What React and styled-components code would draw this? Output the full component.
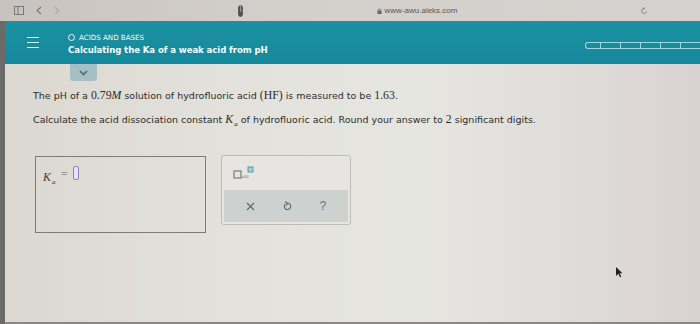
import React from "react";
import styled, { createGlobalStyle } from "styled-components";

const Global = createGlobalStyle`
  html, body { margin: 0; padding: 0; }
  body {
    width: 700px;
    height: 324px;
    overflow: hidden;
    background: #6c6a68;
    font-family: "DejaVu Sans", "Liberation Sans", sans-serif;
  }
`;

const Frame = styled.div`
  width: 700px;
  height: 324px;
  display: flex;
  flex-direction: column;
`;

const BrowserBar = styled.div`
  height: 21px;
  background: linear-gradient(90deg, #c9c3bf 0%, #d3cfcb 40%, #d6d2cf 100%);
  display: flex;
  align-items: center;
  padding-left: 14px;
  color: #6a6866;
  font-size: 8px;
`;

const NavIcons = styled.div`
  display: flex;
  align-items: center;
  gap: 12px;
  width: 210px;
`;

const Address = styled.div`
  flex: 1;
  height: 21px;
  display: flex;
  align-items: center;
  justify-content: center;
  position: relative;
  gap: 3px;
  color: #5a5856;
  font-family: "Liberation Sans", sans-serif;
  font-size: 8px;
  padding-right: 30px;
`;

const Reload = styled.div`
  width: 60px;
  display: flex;
  justify-content: flex-start;
  color: #7a7876;
`;

const Screen = styled.div`
  flex: 1;
  margin-left: 5px;
  display: flex;
  flex-direction: column;
  background: linear-gradient(90deg, #dbd8d1 0%, #e3e2dc 35%, #e6e6e1 60%, #dedad8 85%, #d9d2d3 100%);
`;

const Header = styled.div`
  height: 43px;
  background: linear-gradient(180deg, #1b91a2 0%, #15899b 100%);
  display: flex;
  align-items: center;
  color: #f2fbfc;
`;

const Burger = styled.div`
  width: 63px;
  display: flex;
  flex-direction: column;
  align-items: flex-start;
  padding-left: 22px;
  box-sizing: border-box;
  gap: 3.5px;
  span {
    width: 12px;
    height: 1.6px;
    background: #d9eef1;
  }
`;

const Titles = styled.div`
  flex: 1;
  display: flex;
  flex-direction: column;
  gap: 3px;
  padding-top: 2px;
`;

const Topic = styled.div`
  font-size: 7.1px;
  display: flex;
  align-items: center;
  gap: 4px;
  &::before {
    content: "";
    width: 5px;
    height: 5px;
    border: 1px solid #e8f6f8;
    border-radius: 50%;
  }
`;

const Title = styled.div`
  font-size: 8.6px;
  font-weight: 700;
  letter-spacing: -0.1px;
`;

const Progress = styled.div`
  display: flex;
  align-items: center;
  margin-top: 6px;
  span {
    width: 19px;
    height: 5px;
    border: 1px solid #a6d6dd;
    border-right: none;
  }
  span:first-child {
    border-radius: 3px 0 0 3px;
    width: 14px;
  }
`;

const Body = styled.div`
  flex: 1;
  padding: 0 0 0 28px;
  display: flex;
  flex-direction: column;
  position: relative;
`;

const Tab = styled.div`
  margin-left: 37px;
  width: 27px;
  height: 17px;
  background: #a7bec3;
  border-radius: 0 0 3px 3px;
  display: flex;
  align-items: center;
  justify-content: center;
`;

const Para = styled.p`
  margin: ${p => p.$top}px 0 0;
  font-size: 9.5px;
  line-height: 12px;
  color: #2c2c2c;
  white-space: nowrap;
`;

const Math = styled.span`
  font-family: "Liberation Serif", serif;
  font-size: 11.8px;
  font-style: ${p => (p.$italic ? "italic" : "normal")};
`;

const Sub = styled.sub`
  font-family: "Liberation Serif", serif;
  font-style: italic;
  font-size: 7px;
  vertical-align: -3px;
  margin-left: 1px;
`;

const Work = styled.div`
  display: flex;
  align-items: flex-start;
  gap: 15px;
  margin-top: 25px;
  margin-left: 2px;
`;

const AnswerBox = styled.div`
  width: 171px;
  height: 77px;
  margin-top: 1px;
  border: 1px solid #7e7c78;
  padding: 9px 0 0 7px;
  box-sizing: border-box;
  display: flex;
  align-items: flex-start;
  gap: 5px;
  color: #3a3a3a;
`;

const Equals = styled.span`
  font-size: 9px;
  color: #666;
  margin-top: 2px;
`;

const Slot = styled.span`
  width: 4px;
  height: 12px;
  border: 1.5px solid #8a84c4;
  border-radius: 2px;
  background: #e6e4f2;
`;

const Tools = styled.div`
  width: 130px;
  height: 70px;
  border: 1px solid #bdbcb8;
  border-radius: 3px;
  background: #e6e5e1;
  display: flex;
  flex-direction: column;
  box-sizing: border-box;
  padding: 0 2px 2px;
`;

const ToolTop = styled.div`
  height: 34px;
  display: flex;
  align-items: center;
  padding-left: 9px;
`;

const ToolRow = styled.div`
  flex: 1;
  background: #cdd1d0;
  display: flex;
  align-items: center;
  justify-content: space-around;
  padding: 0 8px;
  color: #666;
  font-size: 12px;
`;

const Cursor = styled.div`
  position: absolute;
  left: 610px;
  top: 199px;
`;

const BottomEdge = styled.div`
  height: 2px;
  background: #8a8886;
`;

function SciIcon() {
  return (
    <svg width="28" height="14" viewBox="0 0 28 14">
      <rect x="1" y="5" width="7" height="7" fill="none" stroke="#666" strokeWidth="1" />
      <text x="9" y="12" fontSize="4" fill="#666" fontFamily="Liberation Sans">x10</text>
      <rect x="15" y="1" width="5" height="5" fill="#9fd0d6" stroke="#3a8f9c" strokeWidth="0.8" />
    </svg>
  );
}

export default function App() {
  return (
    <Frame>
      <Global />
      <BrowserBar>
        <NavIcons>
          <svg width="10" height="9" viewBox="0 0 10 9">
            <rect x="0.5" y="0.5" width="9" height="8" fill="none" stroke="#777" />
            <line x1="4" y1="0.5" x2="4" y2="8.5" stroke="#777" />
          </svg>
          <svg width="6" height="9" viewBox="0 0 6 9">
            <path d="M5 1 L1 4.5 L5 8" fill="none" stroke="#777" strokeWidth="1.1" />
          </svg>
          <svg width="6" height="9" viewBox="0 0 6 9">
            <path d="M1 1 L5 4.5 L1 8" fill="none" stroke="#aaa" strokeWidth="1.1" />
          </svg>
        </NavIcons>
        <Address>
          <svg width="5" height="12" viewBox="0 0 5 12" style={{ position: "absolute", left: 14 }}>
            <path d="M0.5 3 Q0.5 0.5 2.5 0.5 Q4.5 0.5 4.5 3 L4.5 9 Q4.5 11.5 2.5 11.5 Q0.5 11.5 0.5 9 Z" fill="#555" stroke="#333" strokeWidth="0.6" />
            <path d="M2.5 0.5 L2.5 6 L4.5 6" fill="none" stroke="#ccc" strokeWidth="0.6" />
          </svg>
          <svg width="5" height="6" viewBox="0 0 5 6">
            <rect x="0.5" y="2.5" width="4" height="3.5" fill="#666" />
            <path d="M1.3 2.6 V1.6 Q2.5 0 3.7 1.6 V2.6" fill="none" stroke="#666" strokeWidth="0.8" />
          </svg>
          www-awu.aleks.com
        </Address>
        <Reload>
          <svg width="8" height="8" viewBox="0 0 8 8">
            <path d="M6.5 4 A2.5 2.5 0 1 1 4 1.5" fill="none" stroke="#888" strokeWidth="0.9" />
            <path d="M3.5 0.3 L5 1.5 L3.5 2.7" fill="none" stroke="#888" strokeWidth="0.9" />
          </svg>
        </Reload>
      </BrowserBar>
      <Screen>
        <Header>
          <Burger>
            <span />
            <span />
            <span />
          </Burger>
          <Titles>
            <Topic>ACIDS AND BASES</Topic>
            <Title>Calculating the Ka of a weak acid from pH</Title>
          </Titles>
          <Progress>
            <span />
            <span />
            <span />
            <span />
            <span />
            <span />
          </Progress>
        </Header>
        <Body>
          <Tab>
            <svg width="9" height="6" viewBox="0 0 9 6">
              <path d="M1 1 L4.5 4.5 L8 1" fill="none" stroke="#3f6f7c" strokeWidth="1.6" />
            </svg>
          </Tab>
          <Para $top={8}>
            The pH of a <Math>0.79</Math><Math $italic>M</Math> solution of hydrofluoric acid <Math>(HF)</Math> is measured to be <Math>1.63</Math>.
          </Para>
          <Para $top={11}>
            Calculate the acid dissociation constant <Math $italic>K</Math><Sub>a</Sub> of hydrofluoric acid. Round your answer to <Math>2</Math> significant digits.
          </Para>
          <Work>
            <AnswerBox>
              <span>
                <Math $italic>K</Math>
                <Sub>a</Sub>
              </span>
              <Equals>=</Equals>
              <Slot />
            </AnswerBox>
            <Tools>
              <ToolTop>
                <SciIcon />
              </ToolTop>
              <ToolRow>
                <svg width="9" height="9" viewBox="0 0 9 9">
                  <path d="M1 1 L8 8 M8 1 L1 8" stroke="#666" strokeWidth="1.1" />
                </svg>
                <svg width="9" height="10" viewBox="0 0 9 10">
                  <path d="M2.2 3.2 A3.2 3.2 0 1 0 4.5 2.2" fill="none" stroke="#666" strokeWidth="1.1" />
                  <path d="M2 0.8 L4.6 2.2 L3 4.6" fill="none" stroke="#666" strokeWidth="1.1" />
                </svg>
                <span style={{ color: "#3f7fa8", fontFamily: "Liberation Sans" }}>?</span>
              </ToolRow>
            </Tools>
          </Work>
          <Cursor>
            <svg width="8" height="12" viewBox="0 0 8 12">
              <path d="M1 1 L1 10 L3.3 7.8 L5 11.2 L6.3 10.6 L4.7 7.3 L7.5 7.3 Z" fill="#222" />
            </svg>
          </Cursor>
        </Body>
        <BottomEdge />
      </Screen>
    </Frame>
  );
}
